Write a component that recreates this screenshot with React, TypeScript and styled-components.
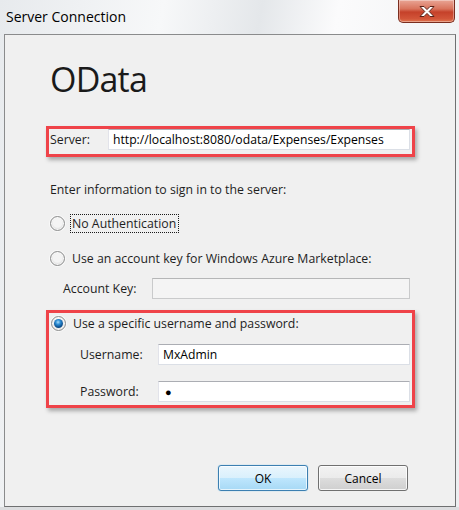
import * as React from 'react'
import styled, { createGlobalStyle, css } from 'styled-components'

const GlobalStyle = createGlobalStyle`
    html, body {
        margin: 0;
        padding: 0;
        background: #eef0f2;
    }
    body {
        font-family: "Open Sans", "Noto Sans", "Liberation Sans", sans-serif;
        font-size: 12.3px;
        color: #1e1e1e;
    }
`

/////////////////////////////////////////////////////////////////////////////////////////////////
// Window chrome

const Ventana = styled.div`
    width: 459px;
    height: 510px;
    display: flex;
    flex-direction: column;
    box-sizing: border-box;
    background: linear-gradient(100deg, #e7eaed 0%, #f7f8f9 30%, #e4e7ea 48%, #fbfbfc 62%, #eceef0 100%);
    border-bottom: 3px solid #dcdddf;
`

const BarraTitulo = styled.div`
    height: 34px;
    flex: 0 0 34px;
    display: flex;
    justify-content: space-between;
    align-items: flex-start;
`

const Titulo = styled.div`
    margin: 7px 0 0 6px;
    font-size: 14px;
    line-height: 20px;
    color: #000;
`

const BotonCerrar = styled.div`
    width: 57px;
    height: 23px;
    margin-right: 4px;
    box-sizing: border-box;
    border: 1px solid #7a2d1f;
    border-top: none;
    border-radius: 0 0 5px 5px;
    background: linear-gradient(#e9a595 0%, #d9745d 40%, #c5412a 55%, #d25539 85%, #e0764f 100%);
    box-shadow: inset 0 0 0 1px rgba(255, 255, 255, 0.35);
    display: flex;
    align-items: center;
    justify-content: center;
`

const Panel = styled.div`
    flex: 1;
    margin: 0 3px 0 4px;
    border: 1px solid #8a8b8c;
    border-right-color: #6f7071;
    border-bottom-color: #6f7071;
    background: #f0f0f0;
    padding: 0 40px 0 41px;
    display: flex;
    flex-direction: column;
`

/////////////////////////////////////////////////////////////////////////////////////////////////
// Contenido

const Encabezado = styled.h1`
    margin: 26px 0 0 4px;
    font-size: 34px;
    line-height: 36px;
    font-weight: 400;
    letter-spacing: -0.8px;
    color: #1a1a1a;
`

const CuadroRojo = styled.div`
    border: 3px solid #ef4349;
    box-shadow: 2px 3px 4px rgba(0, 0, 0, 0.3);
    display: flex;
    flex-direction: column;
    ${({ $top }) => css`margin-top: ${$top}px;`}
`

const Fila = styled.div`
    display: flex;
    align-items: center;
    ${({ $top }) => $top !== undefined && css`margin-top: ${$top}px;`}
    ${({ $left }) => $left !== undefined && css`padding-left: ${$left}px;`}
    ${({ $right }) => $right !== undefined && css`padding-right: ${$right}px;`}
    ${({ $bottom }) => $bottom !== undefined && css`padding-bottom: ${$bottom}px;`}
`

const Etiqueta = styled.span`
    flex: 0 0 ${({ $ancho }) => $ancho}px;
    line-height: 16px;
`

const CampoTexto = styled.div`
    flex: 1;
    height: 21px;
    box-sizing: border-box;
    border: 1px solid #dbdfe6;
    border-top-color: #abadb3;
    border-left-color: #e2e3ea;
    background: ${({ $deshabilitado }) => ($deshabilitado ? '#f4f4f4' : '#ffffff')};
    ${({ $deshabilitado }) => $deshabilitado && css`border-color: #c9cacb; border-top-color: #b5b6b7;`}
    padding: 0 4px;
    display: flex;
    align-items: center;
    font-size: 12.2px;
    color: #000;
    white-space: nowrap;
    overflow: hidden;
`

const Punto = styled.span`
    font-size: 11px;
    margin-left: 2px;
`

const Texto = styled.div`
    line-height: 16px;
    ${({ $top }) => css`margin-top: ${$top}px;`}
    margin-left: 4px;
`

const FilaRadio = styled.div`
    display: flex;
    align-items: center;
    height: 20px;
    gap: 7px;
    ${({ $top }) => $top !== undefined && css`margin-top: ${$top}px;`}
    margin-left: ${({ $left }) => $left}px;
`

const Radio = styled.span`
    position: relative;
    width: 13px;
    height: 13px;
    flex: 0 0 13px;
    border-radius: 50%;
    border: 1px solid #8e8f8f;
    background: radial-gradient(circle at 50% 45%, #f4f4f4 0%, #f4f4f4 45%, #d6d6d6 75%, #c9c9c9 100%);
    box-shadow: 0 0 0 1px rgba(255, 255, 255, 0.6), inset 0 0 0 1px rgba(255, 255, 255, 0.7);

    ${({ $elegido }) =>
        $elegido &&
        css`
            &::after {
                content: "";
                position: absolute;
                left: 2px;
                top: 2px;
                width: 9px;
                height: 9px;
                border-radius: 50%;
                background: radial-gradient(circle at 45% 35%, #a9dcf8 0%, #2f8fd6 30%, #0c4f8e 65%, #08305a 100%);
            }
    `}
`

const TextoRadio = styled.span`
    line-height: 17px;
    padding: 0 2px 0 1px;
    margin-left: -2px;
    border: 1px solid transparent;
    ${({ $foco }) => $foco && css`border: 1px dotted #1a1a1a;`}
`

const FilaBotones = styled.div`
    margin-top: 57px;
    padding-right: 7px;
    display: flex;
    justify-content: flex-end;
    gap: 10px;
`

const Boton = styled.button`
    width: 90px;
    height: 26px;
    border-radius: 3px;
    font-family: inherit;
    font-size: 12px;
    color: #000;
    padding: 0;
    border: 1px solid #707070;
    background: linear-gradient(#f2f2f2 0%, #ebebeb 50%, #dddddd 51%, #cfcfcf 100%);
    box-shadow: inset 0 0 0 1px rgba(255, 255, 255, 0.8);

    ${({ $predeterminado }) =>
        $predeterminado &&
        css`
            border-color: #3c7fb1;
            background: linear-gradient(#eaf6fd 0%, #d9f0fc 50%, #bee6fd 51%, #a7d9f5 100%);
            box-shadow: inset 0 0 0 1px rgba(255, 255, 255, 0.7), 0 0 1px #48b2ee;
    `}
`

const IconoCerrar = () => (
    <svg width="18" height="13" viewBox="0 0 18 13">
        <path
            d="M2 1.5 L6 1.5 L9 4.6 L12 1.5 L16 1.5 L11.2 6.5 L16 11.5 L12 11.5 L9 8.4 L6 11.5 L2 11.5 L6.8 6.5 Z"
            fill="#ffffff"
            stroke="#5a2218"
            strokeWidth="1"
            strokeLinejoin="round"
        />
    </svg>
)

export default function App() {
    return (
        <>
            <GlobalStyle />
            <Ventana>
                <BarraTitulo>
                    <Titulo>Server Connection</Titulo>
                    <BotonCerrar>
                        <IconoCerrar />
                    </BotonCerrar>
                </BarraTitulo>
                <Panel>
                    <Encabezado>OData</Encabezado>

                    <CuadroRojo $top={29}>
                        <Fila $left={1} $right={2} $bottom={4}>
                            <Etiqueta $ancho={58}>Server:</Etiqueta>
                            <CampoTexto>http://localhost:8080/odata/Expenses/Expenses</CampoTexto>
                        </Fila>
                    </CuadroRojo>

                    <Texto $top={25}>Enter information to sign in to the server:</Texto>

                    <FilaRadio $top={15} $left={4}>
                        <Radio />
                        <TextoRadio $foco>No Authentication</TextoRadio>
                    </FilaRadio>

                    <FilaRadio $top={15} $left={4}>
                        <Radio />
                        <TextoRadio>Use an account key for Windows Azure Marketplace:</TextoRadio>
                    </FilaRadio>

                    <Fila $top={10} $left={17} $right={5}>
                        <Etiqueta $ancho={89}>Account Key:</Etiqueta>
                        <CampoTexto $deshabilitado />
                    </Fila>

                    <CuadroRojo $top={11}>
                        <FilaRadio $left={2}>
                            <Radio $elegido />
                            <TextoRadio>Use a specific username and password:</TextoRadio>
                        </FilaRadio>
                        <Fila $top={11} $left={31} $right={2}>
                            <Etiqueta $ancho={78}>Username:</Etiqueta>
                            <CampoTexto>MxAdmin</CampoTexto>
                        </Fila>
                        <Fila $top={16} $left={31} $right={2} $bottom={3}>
                            <Etiqueta $ancho={78}>Password:</Etiqueta>
                            <CampoTexto>
                                <Punto>●</Punto>
                            </CampoTexto>
                        </Fila>
                    </CuadroRojo>

                    <FilaBotones>
                        <Boton $predeterminado>OK</Boton>
                        <Boton>Cancel</Boton>
                    </FilaBotones>
                </Panel>
            </Ventana>
        </>
    )
}
